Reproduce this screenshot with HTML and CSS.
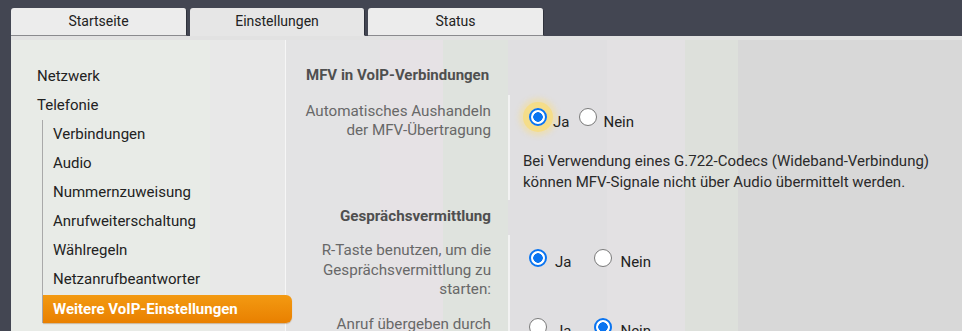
FILE: index.html
```html
<!DOCTYPE html>
<html lang="de">
<head>
    <meta charset="UTF-8">
    <title>Weitere VoIP-Einstellungen</title>
    <link rel="stylesheet" href="styles.css">
</head>
<body>
    <div class="page">

        <div class="tabs">
            <div class="tab">Startseite</div>
            <div class="tab active">Einstellungen</div>
            <div class="tab">Status</div>
        </div>

        <div class="panel">
            <div class="sidebar">
                <div class="menu-item">Netzwerk</div>
                <div class="menu-item">Telefonie</div>
                <div class="submenu">
                    <div class="sub-item">Verbindungen</div>
                    <div class="sub-item">Audio</div>
                    <div class="sub-item">Nummernzuweisung</div>
                    <div class="sub-item">Anrufweiterschaltung</div>
                    <div class="sub-item">Wählregeln</div>
                    <div class="sub-item">Netzanrufbeantworter</div>
                    <div class="sub-item current">Weitere VoIP-Einstellungen</div>
                </div>
            </div>

            <div class="content">
                <h2 class="section-title">MFV in VoIP-Verbindungen</h2>

                <div class="row row-first">
                    <div class="label">Automatisches Aushandeln<br>der MFV-Übertragung</div>
                    <div class="value">
                        <div class="choices tight">
                            <label class="choice"><input type="radio" name="mfv" class="focused" checked><span>Ja</span></label>
                            <label class="choice"><input type="radio" name="mfv"><span>Nein</span></label>
                        </div>
                        <p class="hint">Bei Verwendung eines G.722-Codecs (Wideband-Verbindung)<br>können MFV-Signale nicht über Audio übermittelt werden.</p>
                    </div>
                </div>

                <div class="row">
                    <h2 class="label label-title">Gesprächsvermittlung</h2>
                </div>

                <div class="row row-second">
                    <div class="label">R-Taste benutzen, um die<br>Gesprächsvermittlung zu<br>starten:</div>
                    <div class="value">
                        <div class="choices">
                            <label class="choice"><input type="radio" name="rtaste" checked><span>Ja</span></label>
                            <label class="choice"><input type="radio" name="rtaste"><span>Nein</span></label>
                        </div>
                    </div>
                </div>

                <div class="row row-third">
                    <div class="label">Anruf übergeben durch</div>
                    <div class="value">
                        <div class="choices">
                            <label class="choice"><input type="radio" name="uebergabe"><span>Ja</span></label>
                            <label class="choice"><input type="radio" name="uebergabe" checked><span>Nein</span></label>
                        </div>
                    </div>
                </div>
            </div>
        </div>

    </div>
</body>
</html>
```

FILE: styles.css
```css
:root {
    --frameColor: #434652;
    --tabColor: #ececec;
    --radioBlue: #0a74f0;
    --textColor: #222222;
    --labelColor: #686868;
    --headColor: #4f4f4f;
    --mainFont: Roboto, "Liberation Sans", sans-serif;
}
html {
    height: 331px;
    overflow: hidden;
}
body {
    margin: 0;
    padding: 0;
    background-color: var(--frameColor);
    font-family: var(--mainFont);
    color: var(--textColor);
}
.page {
    padding: 8px 0 0 11px;
}
.tabs {
    display: flex;
    gap: 3px;
    height: 28px;
}
.tab {
    width: 175px;
    background-color: var(--tabColor);
    border-radius: 3px 3px 0 0;
    border-right: 1px solid #2e313b;
    border-bottom: 1px solid #8a8a8e;
    text-align: center;
    font-size: 14px;
    line-height: 27px;
    color: #222;
}
.tab.active {
    width: 174px;
    background-color: #e6e6e6;
    border-bottom: 1px solid #e6e6e6;
}
.panel {
    display: flex;
    height: 291px;
    padding-top: 4px;
    background-color: #e2e2e2;
}
.sidebar {
    width: 274px;
    flex-shrink: 0;
    padding-top: 22px;
    border-right: 1px solid #f6f6f6;
    background: linear-gradient(to right, #e8ebe7 0, #e8ebe7 199px, #e8e8e8 199px);
    font-size: 15px;
}
.menu-item {
    height: 29px;
    line-height: 28px;
    padding-left: 26px;
}
.submenu {
    margin-left: 31px;
    border-left: 1px solid #a9a9a9;
}
.sub-item {
    height: 29px;
    line-height: 28px;
    padding-left: 10px;
}
.sub-item.current {
    position: relative;
    width: 239px;
    height: 28px;
    margin-top: 1px;
    background: linear-gradient(to bottom, #f39a12, #e98000);
    border-radius: 0 6px 6px 0;
    box-shadow: 0 1px 1px rgba(150, 80, 0, 0.35);
    color: #ffffff;
    font-weight: bold;
}
.content {
    flex: 1;
    background: linear-gradient(to right,
        #e3e3e4 0, #e3e3e4 94px,
        #e6e2e5 94px, #e6e2e5 157px,
        #dfe3de 157px, #dfe3de 222px,
        #e0dfe1 222px, #e0dfe1 321px,
        #e3e1e3 321px, #e3e1e3 399px,
        #dde0db 399px, #dde0db 452px,
        #d8d8d8 452px);
}
.section-title {
    margin: 0;
    padding: 26px 0 0 20px;
    height: 29px;
    font-size: 15px;
    line-height: 18px;
    font-weight: bold;
    color: var(--headColor);
}
.row {
    display: flex;
}
.label {
    width: 205px;
    flex-shrink: 0;
    padding-right: 17px;
    text-align: right;
    font-size: 15.2px;
    line-height: 19px;
    color: var(--labelColor);
}
.label-title {
    margin: 0;
    height: 35px;
    padding-top: 7px;
    box-sizing: border-box;
    width: 222px;
    font-size: 15.2px;
    line-height: 18px;
    font-weight: bold;
    color: var(--headColor);
}
.value {
    flex: 1;
    border-left: 2px solid #f2f2f2;
    padding-left: 19px;
}
.row-first .label {
    padding-top: 7px;
}
.row-first .value {
    height: 105px;
}
.row-first .choices {
    padding-top: 13px;
}
.row-second .label {
    padding-top: 6px;
    line-height: 19.5px;
}
.row-second .value {
    height: 75px;
}
.row-second .choices {
    padding-top: 14px;
}
.row-third .label {
    padding-top: 5px;
}
.row-third .value {
    height: 40px;
}
.row-third .choices {
    padding-top: 8px;
}
.choices {
    display: flex;
    gap: 23px;
}
.choices.tight {
    gap: 10px;
}
.choice {
    display: flex;
    align-items: flex-start;
    gap: 8px;
    font-size: 15px;
    line-height: 18px;
    color: #222;
}
.tight .choice {
    gap: 6px;
}
.choice span {
    margin-top: 4px;
}
.tight .choice span {
    margin-top: 5px;
}
.choice input {
    appearance: none;
    -webkit-appearance: none;
    margin: 0;
    width: 18px;
    height: 18px;
    border-radius: 50%;
    border: 1px solid #7a7a7a;
    background-color: #ffffff;
    box-sizing: border-box;
}
.choice input:checked {
    border: 2px solid var(--radioBlue);
    background: radial-gradient(circle, var(--radioBlue) 0, var(--radioBlue) 4.5px, #ffffff 5px);
}
.choice input.focused {
    box-shadow: 0 0 0 6px rgba(248, 220, 125, 0.8), 0 0 5px 10px rgba(248, 222, 135, 0.45);
}
.hint {
    margin: 20px 0 0 -6px;
    font-size: 15px;
    line-height: 21px;
    color: #2a2a2a;
}
```
